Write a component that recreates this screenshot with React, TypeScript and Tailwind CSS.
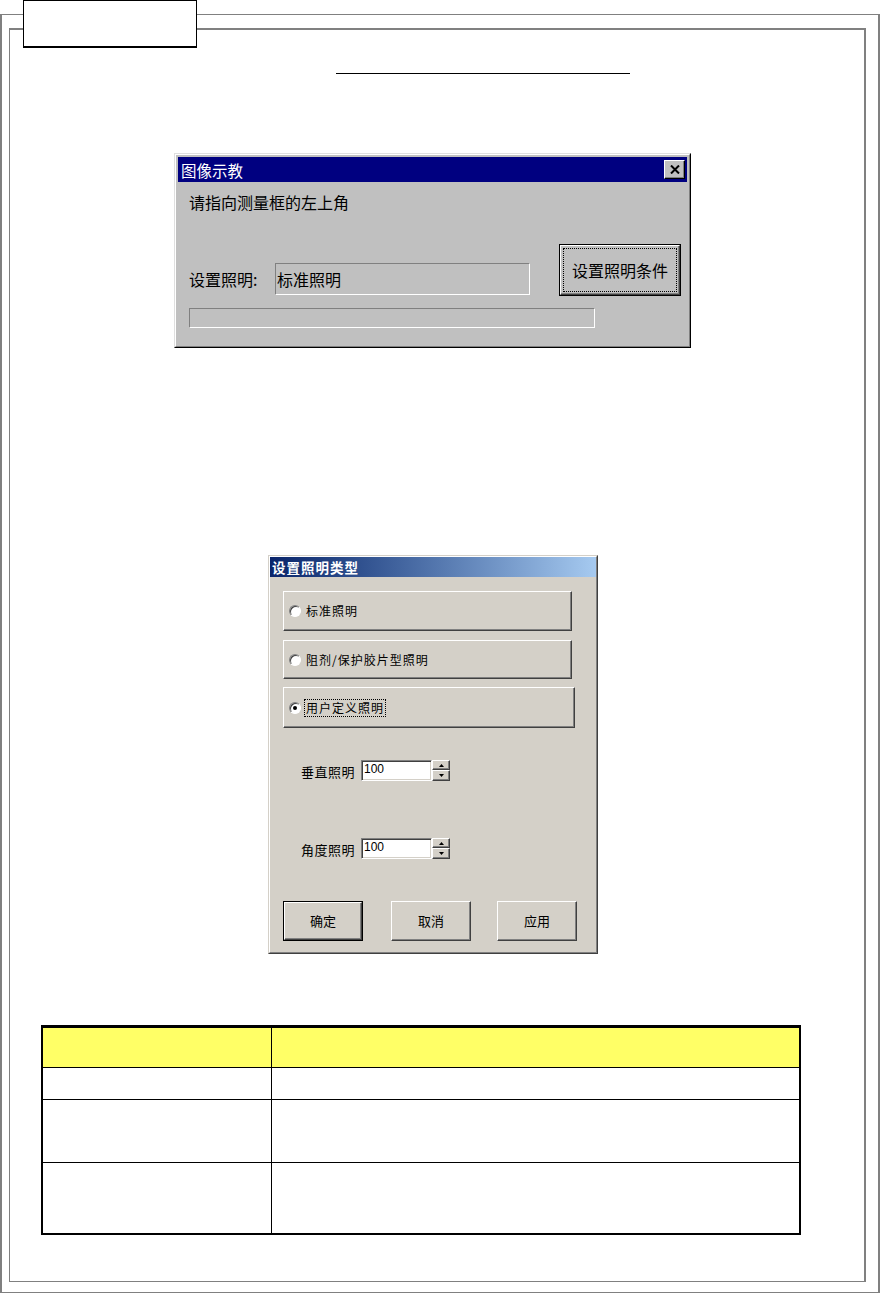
import React from "react";

const cjk = { fontFamily: '"Noto Sans CJK SC", "Noto Sans", sans-serif' };

function Radio({ checked }: { checked?: boolean }) {
  return (
    <div className="w-[12px] h-[12px] rounded-full border border-t-[#808080] border-l-[#808080] border-b-white border-r-white bg-white flex items-center justify-center shadow-[inset_1px_1px_0_#404040]">
      {checked && <div className="w-[4px] h-[4px] rounded-full bg-black" />}
    </div>
  );
}

function PushBox({ w, h, checked, children, focus }: { w: string; h: string; checked?: boolean; children: React.ReactNode; focus?: boolean }) {
  return (
    <div
      className={`${w} ${h} flex items-center pl-[5px] border border-t-white border-l-white border-b-[#404040] border-r-[#404040] shadow-[inset_-1px_-1px_0_#808080] bg-[#d4d0c8]`}
    >
      <Radio checked={checked} />
      <span
        className={`ml-[4px] text-[12px] tracking-[1px] leading-[16px] text-black px-[1px] ${focus ? "outline outline-1 outline-dotted outline-black" : ""}`}
        style={cjk}
      >
        {children}
      </span>
    </div>
  );
}

function SpinRow({ label }: { label: string }) {
  return (
    <div className="flex items-center pl-[31px]">
      <span className="w-[60px] text-[13px] tracking-[0.5px] text-black leading-[16px] pt-[2px]" style={cjk}>
        {label}
      </span>
      <div className="w-[71px] h-[21px] bg-white border border-t-[#808080] border-l-[#808080] border-b-white border-r-white shadow-[inset_1px_1px_0_#404040,inset_-1px_-1px_0_#d4d0c8] pl-[2px] pt-[1px] text-[12px] leading-[14px] text-black" style={{ fontFamily: '"Liberation Sans", Arial, sans-serif' }}>
        100
      </div>
      <div className="flex flex-col w-[18px] h-[21px]">
        <div className="h-[10px] flex items-center justify-center border border-t-white border-l-white border-b-[#404040] border-r-[#404040] bg-[#d4d0c8] shadow-[inset_-1px_-1px_0_#808080]">
          <svg width="5" height="3" viewBox="0 0 5 3"><path d="M2.5 0 L5 3 L0 3 Z" fill="#000" /></svg>
        </div>
        <div className="h-[11px] flex items-center justify-center border border-t-white border-l-white border-b-[#404040] border-r-[#404040] bg-[#d4d0c8] shadow-[inset_-1px_-1px_0_#808080]">
          <svg width="5" height="3" viewBox="0 0 5 3"><path d="M0 0 L5 0 L2.5 3 Z" fill="#000" /></svg>
        </div>
      </div>
    </div>
  );
}

function WinButton({ children, def }: { children: React.ReactNode; def?: boolean }) {
  return (
    <div className={`w-[80px] h-[40px] ${def ? "border border-black" : ""}`}>
      <div className="w-full h-full flex items-center justify-center border border-t-white border-l-white border-b-[#404040] border-r-[#404040] shadow-[inset_-1px_-1px_0_#808080] bg-[#d4d0c8] text-[13px] text-black" style={cjk}>
        {children}
      </div>
    </div>
  );
}

export default function App() {
  return (
    <div className="w-[880px] h-[1293px] bg-white relative pt-[14px]">
      {/* outer frame */}
      <div className="h-[1279px] border-l-2 border-r-2 border-t border-b border-[#808080] pl-[7px] pr-[12px] pt-[13px]">
        {/* inner frame */}
        <div className="h-[1254px] border-t-2 border-r-2 border-l border-b border-[#808080] flex flex-col">
          {/* heading underline */}
          <div className="ml-[326px] mt-[43px] w-[294px] h-px bg-black" />

          {/* Dialog 1 */}
          <div className="ml-[164px] mt-[79px] w-[517px] border border-t-[#dfdfdf] border-l-[#dfdfdf] border-b-black border-r-black">
            <div className="border border-t-white border-l-white border-b-[#808080] border-r-[#808080] bg-[#c0c0c0] p-[2px]">
              <div className="h-[25px] bg-[#000080] flex items-center justify-between pl-[3px] pr-[2px]">
                <span className="text-white text-[15.5px] leading-[18px]" style={cjk}>图像示教</span>
                <div className="w-[21px] h-[19px] bg-[#c0c0c0] border border-t-white border-l-white border-b-black border-r-black shadow-[inset_-1px_-1px_0_#808080] flex items-center justify-center">
                  <svg width="10" height="9" viewBox="0 0 10 9">
                    <path d="M1 0.5 L9 8.5 M9 0.5 L1 8.5" stroke="#000" strokeWidth="2" />
                  </svg>
                </div>
              </div>
              <div className="pt-[11px] pb-[16px] pl-[11px]">
                <div className="text-[16px] leading-[18px] text-black" style={cjk}>请指向测量框的左上角</div>
                <div className="flex items-start mt-[33px]">
                  <div className="flex items-center mt-[19px]">
                    <span className="w-[86px] text-[16px] leading-[18px] text-black" style={cjk}>设置照明:</span>
                    <div className="w-[255px] h-[32px] border border-t-[#808080] border-l-[#808080] border-b-white border-r-white flex items-center pl-[1px] text-[16px] text-black" style={cjk}>
                      标准照明
                    </div>
                  </div>
                  <div className="ml-[29px] w-[122px] h-[52px] border border-black">
                    <div className="w-full h-full border border-t-white border-l-white border-b-[#404040] border-r-[#404040] shadow-[inset_-1px_-1px_0_#808080] p-[2px]">
                      <div className="w-full h-full border border-dotted border-black flex items-center justify-center text-[16px] text-black" style={cjk}>
                        设置照明条件
                      </div>
                    </div>
                  </div>
                </div>
                <div className="mt-[12px] w-[406px] h-[20px] border border-t-[#808080] border-l-[#808080] border-b-white border-r-white" />
              </div>
            </div>
          </div>

          {/* Dialog 2 */}
          <div className="ml-[258px] mt-[207px] w-[330px] border border-t-[#d4d0c8] border-l-[#d4d0c8] border-b-[#404040] border-r-[#404040]">
            <div className="border border-t-white border-l-white border-b-[#808080] border-r-[#808080] bg-[#d4d0c8]">
              <div className="h-[20px] bg-gradient-to-r from-[#0a246a] to-[#a6caf0] flex items-center pl-[2px]">
                <span className="text-white text-[13.5px] font-bold tracking-[1px] leading-[16px]" style={cjk}>设置照明类型</span>
              </div>
              <div className="pt-[14px] pl-[13px] pb-[11px]">
                <PushBox w="w-[289px]" h="h-[40px]">标准照明</PushBox>
                <div className="mt-[9px]">
                  <PushBox w="w-[289px]" h="h-[39px]">阻剂/保护胶片型照明</PushBox>
                </div>
                <div className="mt-[8px]">
                  <PushBox w="w-[292px]" h="h-[41px]" checked focus>用户定义照明</PushBox>
                </div>
                <div className="-ml-[13px] mt-[32px]">
                  <SpinRow label="垂直照明" />
                </div>
                <div className="-ml-[13px] mt-[57px]">
                  <SpinRow label="角度照明" />
                </div>
                <div className="flex mt-[42px]">
                  <WinButton def>确定</WinButton>
                  <div className="ml-[28px]"><WinButton>取消</WinButton></div>
                  <div className="ml-[26px]"><WinButton>应用</WinButton></div>
                </div>
              </div>
            </div>
          </div>

          {/* Table */}
          <div className="ml-[31px] mt-[71px] w-[760px] border-t-[3px] border-l-2 border-r-2 border-b-2 border-black">
            <div className="flex h-[39px] bg-[#ffff66]">
              <div className="w-[229px] border-r border-black" />
              <div className="flex-1" />
            </div>
            <div className="flex h-[32px] border-t border-black">
              <div className="w-[229px] border-r border-black" />
              <div className="flex-1" />
            </div>
            <div className="flex h-[63px] border-t border-black">
              <div className="w-[229px] border-r border-black" />
              <div className="flex-1" />
            </div>
            <div className="flex h-[71px] border-t border-black">
              <div className="w-[229px] border-r border-black" />
              <div className="flex-1" />
            </div>
          </div>
        </div>
      </div>

      {/* tab box overlapping frames */}
      <div className="absolute left-[23px] top-0 w-[174px] h-[48px] bg-white border border-black border-b-2" />
    </div>
  );
}
